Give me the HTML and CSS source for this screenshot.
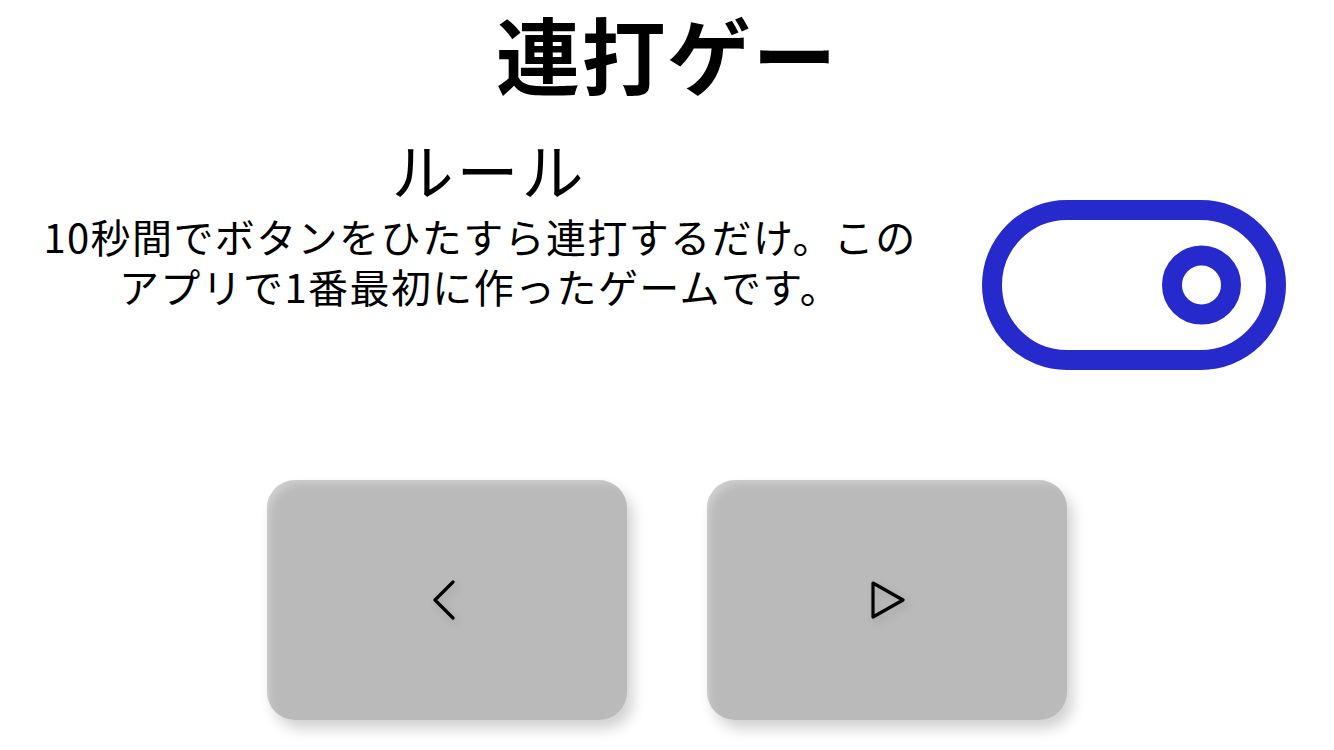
FILE: index.html
```html
<!DOCTYPE html>
<html lang="ja">
<head>
<meta charset="utf-8">
<title>連打ゲー</title>
<link rel="stylesheet" href="styles.css">
</head>
<body>
<main class="page">
  <h1 class="title">連打ゲー</h1>
  <section class="info">
    <div class="rules">
      <h2 class="rules-heading">ルール</h2>
      <p class="rules-text">10秒間でボタンをひたすら連打するだけ。この<br>アプリで1番最初に作ったゲームです。</p>
    </div>
    <div class="toggle-wrap">
      <svg class="toggle" width="304" height="170" viewBox="0 0 304 170" aria-hidden="true">
        <rect x="10" y="10" width="284" height="150" rx="75" ry="75" fill="none" stroke="#2629cc" stroke-width="20"/>
        <circle cx="219.5" cy="85" r="29.5" fill="none" stroke="#2629cc" stroke-width="20"/>
      </svg>
    </div>
  </section>
  <nav class="controls">
    <button class="ctl-btn" type="button" aria-label="戻る">
      <svg class="ctl-icon" width="40" height="48" viewBox="0 0 40 48" aria-hidden="true">
        <polyline points="26,6 8,24 26,42" fill="none" stroke="#000" stroke-width="3.2" stroke-linecap="round" stroke-linejoin="round"/>
      </svg>
    </button>
    <button class="ctl-btn" type="button" aria-label="スタート">
      <svg class="ctl-icon" width="40" height="48" viewBox="0 0 40 48" aria-hidden="true">
        <polygon points="6,7 36,24 6,41" fill="none" stroke="#000" stroke-width="3.2" stroke-linecap="round" stroke-linejoin="round"/>
      </svg>
    </button>
  </nav>
</main>
</body>
</html>
```

FILE: styles.css
```css
html, body {
  margin: 0;
  padding: 0;
  background: #ffffff;
}

body {
  font-family: "Noto Sans CJK JP", "Noto Sans", sans-serif;
  color: #000;
  width: 1334px;
  height: 750px;
  overflow: hidden;
}

.page {
  display: flex;
  flex-direction: column;
}

.title {
  margin: 0;
  padding-top: 7px;
  font-size: 84px;
  font-weight: 700;
  line-height: 92px;
  letter-spacing: 1.5px;
  text-align: center;
}

.info {
  display: grid;
  grid-template-columns: 960px 1fr;
  align-items: start;
  margin-top: 18px;
}

.rules {
  text-align: center;
  padding-top: 14px;
}

.rules-heading {
  margin: 0;
  padding-left: 18px;
  font-size: 62px;
  font-weight: 400;
  line-height: 76px;
  letter-spacing: 3px;
}

.rules-text {
  margin: 4px 0 0;
  font-size: 40px;
  line-height: 50px;
  letter-spacing: 1.4px;
}

.toggle-wrap {
  display: flex;
  justify-content: flex-start;
  padding-left: 22px;
  padding-top: 83px;
}

.toggle {
  display: block;
}

.controls {
  display: flex;
  justify-content: center;
  gap: 80px;
  margin-top: 110px;
}

.ctl-btn {
  width: 360px;
  height: 240px;
  border: none;
  border-radius: 28px;
  background: #bababa;
  box-shadow: 6px 9px 14px rgba(0, 0, 0, 0.18), inset 8px 8px 10px -6px rgba(255, 255, 255, 0.35);
  display: flex;
  align-items: center;
  justify-content: center;
  padding: 0;
  cursor: pointer;
}

.ctl-icon {
  display: block;
  filter: drop-shadow(3px 4px 4px rgba(0, 0, 0, 0.12));
}
```
